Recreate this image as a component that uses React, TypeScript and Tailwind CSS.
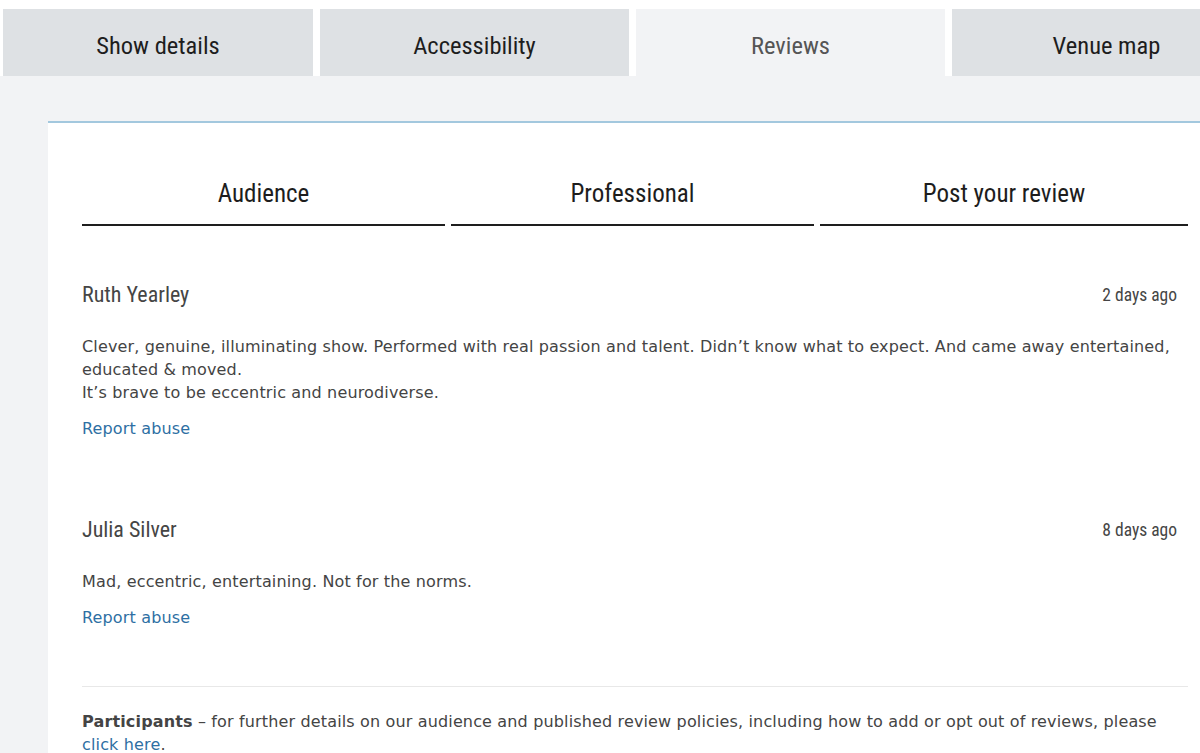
import React from 'react';

const heading = { fontFamily: '"Roboto Condensed", Roboto, "Liberation Sans", sans-serif' };

const topTabs = [
  { label: 'Show details', active: false, w: 'w-[310px]' },
  { label: 'Accessibility', active: false, w: 'w-[309px]' },
  { label: 'Reviews', active: true, w: 'w-[309px]' },
  { label: 'Venue map', active: false, w: 'w-[309px]' },
];

const subTabs = [
  { label: 'Audience', w: 'w-[363px]' },
  { label: 'Professional', w: 'w-[363px]' },
  { label: 'Post your review', w: 'flex-1' },
];

const reviews = [
  {
    name: 'Ruth Yearley',
    when: '2 days ago',
    lines: [
      'Clever, genuine, illuminating show. Performed with real passion and talent. Didn\u2019t know what to expect. And came away entertained, educated & moved.',
      'It\u2019s brave to be eccentric and neurodiverse.',
    ],
  },
  {
    name: 'Julia Silver',
    when: '8 days ago',
    lines: ['Mad, eccentric, entertaining. Not for the norms.'],
  },
];

function Review({ name, when, lines }: { name: string; when: string; lines: string[] }) {
  return (
    <div className="flex flex-col">
      <div className="flex items-center justify-between pr-[11px]">
        <span style={heading} className="text-[22px] leading-[28px] text-[#454545]">
          {name}
        </span>
        <span style={heading} className="text-[17.5px] leading-[28px] text-[#454545]">
          {when}
        </span>
      </div>
      <div className="mt-[26px] text-[16px] leading-[23px] tracking-[0.15px] text-[#444]">
        {lines.map((l) => (
          <p key={l}>{l}</p>
        ))}
      </div>
      <a href="#" className="mt-[13px] text-[16px] leading-[23px] tracking-[0.15px] text-[#2e6fa3]">
        Report abuse
      </a>
    </div>
  );
}

export default function App() {
  return (
    <div
      className="h-[753px] w-[1200px] overflow-hidden bg-[#f2f3f5]"
      style={{ fontFamily: '"DejaVu Sans", "Liberation Sans", sans-serif' }}
    >
      <div className="bg-white pt-[9px]">
        <div className="flex gap-[7px] pl-[3px] -mr-[60px]">
          {topTabs.map((t) => (
            <div
              key={t.label}
              style={heading}
              className={`flex h-[67px] shrink-0 items-center justify-center pt-[8px] text-[24.5px] ${t.w} ${
                t.active ? 'bg-[#f2f3f5] text-[#555]' : 'bg-[#dee1e4] text-[#1d1d1d]'
              }`}
            >
              {t.label}
            </div>
          ))}
        </div>
      </div>

      <div className="ml-[48px] mt-[45px] border-t-2 border-[#a3c8de] bg-white pl-[34px] pr-[12px] pb-[40px]">
        <div className="flex gap-[6px]">
          {subTabs.map((s) => (
            <div
              key={s.label}
              style={heading}
              className={`flex justify-center border-b-2 border-[#1e1e1e] pt-[56px] pb-[15px] text-[25px] leading-[30px] text-[#1d1d1d] ${s.w}`}
            >
              {s.label}
            </div>
          ))}
        </div>

        <div className="mt-[55px] flex flex-col gap-[76px]">
          {reviews.map((r) => (
            <Review key={r.name} {...r} />
          ))}
        </div>

        <div className="mt-[57px] border-t border-[#e8e8e8] pt-[23px] text-[16px] leading-[23px] tracking-[0.15px] text-[#444]">
          <p>
            <span className="font-bold">Participants</span> &ndash; for further details on our audience and
            published review policies, including how to add or opt out of reviews, please{' '}
            <a href="#" className="text-[#2e6fa3]">
              click here
            </a>
            .
          </p>
        </div>
      </div>
    </div>
  );
}
